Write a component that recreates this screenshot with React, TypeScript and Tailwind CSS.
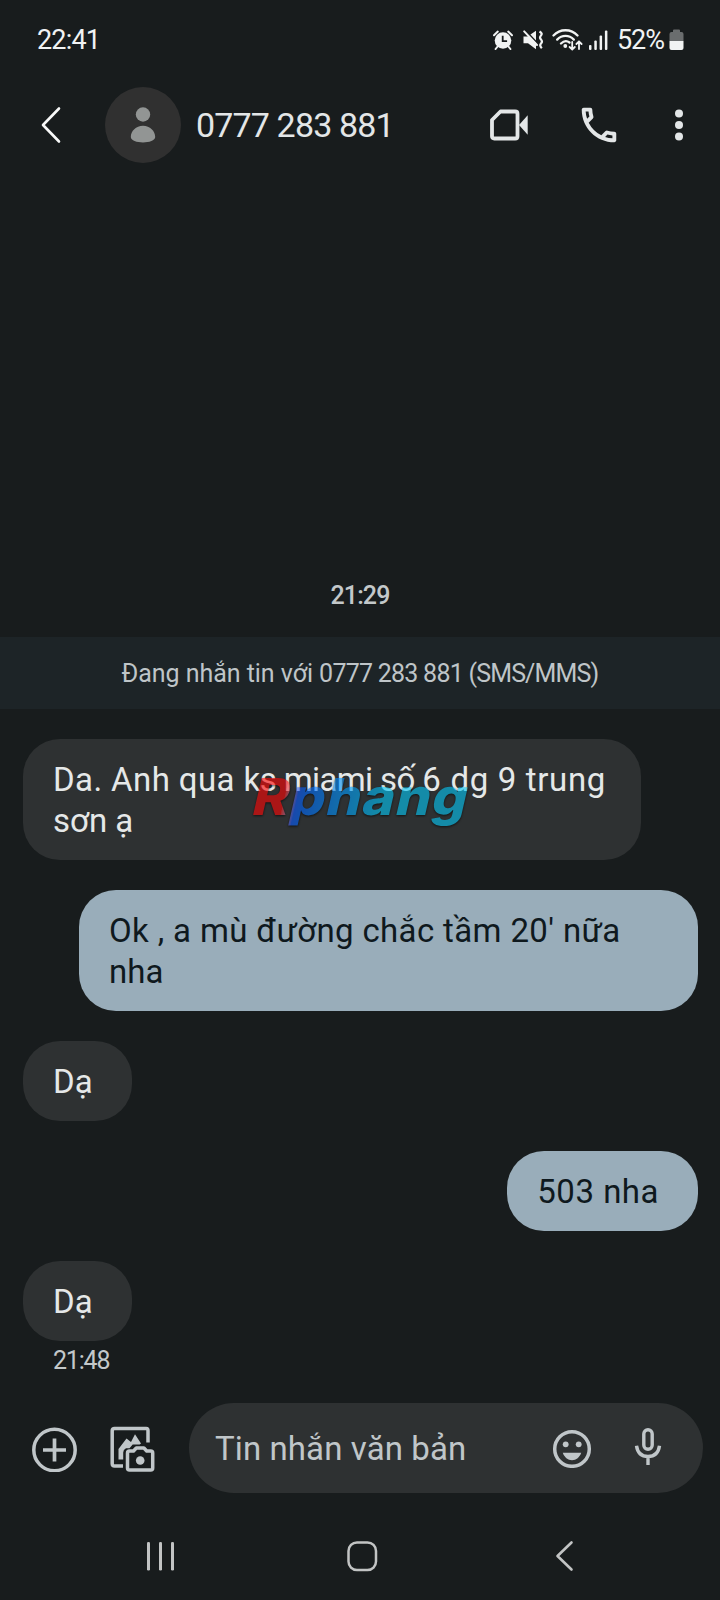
import { ReactNode } from "react";
import { MdOutlineCall } from "react-icons/md";

function StatusBar() {
  return (
    <div className="flex h-20 items-center pl-[37px] pr-[36px] text-[27px] text-[#f1f3f3]">
      <span className="tracking-[-0.8px]">22:41</span>
      <div className="ml-auto flex items-center">
        <svg width="20" height="20" viewBox="0 0 20 20" fill="none">
          <circle cx="10" cy="10.5" r="8.3" fill="#f1f3f3" />
          <path d="M1 5.2 4.8 1.6M19 5.2 15.2 1.6M4.6 16.5 2.6 19M15.4 16.5l2 2.5" stroke="#f1f3f3" strokeWidth="2" strokeLinecap="round" />
          <path d="M9.7 5.8v5.4h4.4" stroke="#181c1d" strokeWidth="1.8" />
        </svg>
        <svg className="ml-[10px]" width="21" height="20" viewBox="0 0 21 20" fill="none">
          <path d="M.5 6.5h4L13 .8v18.4l-8-6H.5z" fill="#f1f3f3" />
          <path d="M1.8 -.4 15 13.8" stroke="#181c1d" strokeWidth="1.6" />
          <path d="M1.2 1.4 14 15" stroke="#f1f3f3" strokeWidth="2" strokeLinecap="round" />
          <path d="M16.5 1.5q3.4 2 1.5 4t0 4 0 4 .8 4.8" stroke="#f1f3f3" strokeWidth="2.2" />
        </svg>
        <svg className="ml-[8px]" width="31" height="22" viewBox="0 0 31 22" fill="none" stroke="#f1f3f3" strokeWidth="2.3" strokeLinecap="round">
          <path d="M1.5 6.5C8-.5 19-.5 25.5 6.5M5.2 10.6c4.8-4.9 11.8-4.9 16.6 0M9 14.5c2.8-2.7 6-2.9 8.5-1" />
          <circle cx="13.3" cy="17" r="1.9" fill="#f1f3f3" stroke="none" />
          <path d="M20.2 13v7.5M17.6 18l2.6 2.6 2.6-2.6M27 20v-7.5M24.4 15l2.6-2.6 2.6 2.6" strokeWidth="1.8" />
        </svg>
        <svg className="ml-[6px]" width="19" height="20" viewBox="0 0 19 20" fill="#f1f3f3">
          <rect x="0" y="15" width="2.5" height="5" rx="1" />
          <rect x="5.3" y="10.5" width="2.5" height="9.5" rx="1" />
          <rect x="10.6" y="5.5" width="2.5" height="14.5" rx="1" />
          <rect x="15.9" y="0.5" width="2.5" height="19.5" rx="1" />
        </svg>
        <span className="ml-[9px] tracking-[-1px]">52%</span>
        <svg className="ml-[5px]" width="15" height="22" viewBox="0 0 15 22">
          <path d="M4 1.5Q4 .5 5 .5h5q1 0 1 1V3h1.5Q14.5 3 14.5 5v7H.5V5Q.5 3 2.5 3H4z" fill="#6a6d6e" />
          <path d="M.5 12h14v7q0 2-2 2h-10q-2 0-2-2z" fill="#f1f3f3" />
        </svg>
      </div>
    </div>
  );
}

function Header() {
  return (
    <header className="flex h-[90px] items-center text-[#e3e6e7]">
      <svg className="ml-[40px]" width="22" height="38" viewBox="0 0 22 38" fill="none">
        <path d="M19 2.5 3 19l16 16.5" stroke="#f8f9f9" strokeWidth="2.6" strokeLinecap="round" strokeLinejoin="round" />
      </svg>
      <div className="ml-[43px] flex size-[76px] items-center justify-center rounded-full bg-[#303030]">
        <svg width="26" height="36" viewBox="0 0 26 36" fill="#929594">
          <circle cx="13" cy="7.5" r="7.2" />
          <path d="M.8 30C.8 24 6 18.7 13 18.7S25.2 24 25.2 30c0 7.2-24.4 7.2-24.4 0z" />
        </svg>
      </div>
      <h1 className="ml-[15px] text-[34px] tracking-[-0.85px]">0777 283 881</h1>
      <div className="ml-auto flex items-center">
        <svg width="40" height="34" viewBox="0 0 40 34">
          <path d="M11.5 3.5h14.7q2.3 0 2.3 2.3v22.4q0 2.3-2.3 2.3H5.3Q3 30.5 3 28.2V12z" fill="none" stroke="#e3e6e7" strokeWidth="3.8" strokeLinejoin="round" />
          <path d="M30 17 38.7 7.3v19.4z" fill="#e3e6e7" />
        </svg>
        <MdOutlineCall className="ml-[47px]" size={46} />
        <svg className="ml-[52px] mr-[36px]" width="10" height="34" viewBox="0 0 10 34" fill="#e3e6e7">
          <circle cx="5" cy="5.5" r="4" /><circle cx="5" cy="17" r="4" /><circle cx="5" cy="28.5" r="4" />
        </svg>
      </div>
    </header>
  );
}

function Bubble({ out, wide, children }: { out?: boolean; wide?: boolean; children: ReactNode }) {
  return (
    <div className={`relative rounded-[37px] pl-[30px] pt-5 text-[33px] leading-[41px] ${out ? "self-end bg-[#99adba] text-[#0f191e]" : "self-start bg-[#2e3132] text-[#e5e8e8]"} ${wide ? "h-[121px]" : "h-20"} ${wide ? (out ? "w-[619px]" : "w-[618px]") : ""}`}>
      {children}
    </div>
  );
}

function Composer() {
  return (
    <div className="flex h-[90px] items-center pl-[31px] pr-[17px] text-[#c0c6c9]">
      <svg width="47" height="47" viewBox="0 0 47 47" fill="none" stroke="#c0c6c9">
        <circle cx="23.5" cy="25" r="20.7" strokeWidth="3.5" />
        <path d="M23.5 13.5v23M12 25h23" strokeWidth="3.7" />
      </svg>
      <svg className="ml-[31px]" width="48" height="48" viewBox="0 0 48 48" fill="none" stroke="#c0c6c9" strokeLinejoin="round">
        <path d="M14 42H5.5q-2.3 0-2.3-2.3V6.8Q3.2 4.5 5.5 4.5h31.7Q39 4.5 39 6.8V18.5" strokeWidth="3.5" />
        <path d="M9.5 35.5V25L17.5 14.5l4.5 3.5L26 10.2l6 9.3-1.3 1.1h-7L20.5 24.3h-3.5q-2.8 1.5-2.8 4.2v7z" fill="#c0c6c9" stroke="none" />
        <path d="M20.5 27h4l2.8-3h7.6l2.8 3h4q2 0 2 2v15q0 2-2 2H20.500q-2 0-2-2V29q0-2 2-2z" strokeWidth="3.5" />
        <circle cx="31.2" cy="36.5" r="4.3" fill="#c0c6c9" stroke="none" />
      </svg>
      <div className="ml-[32px] flex h-[90px] flex-1 items-center rounded-full bg-[#2e3132] pl-[26px]">
        <span className="pt-px text-[33px] tracking-[0.1px]">Tin nhắn văn bản</span>
        <svg className="ml-auto" width="40" height="40" viewBox="0 0 40 40" fill="#c0c6c9">
          <circle cx="20" cy="21" r="17.3" fill="none" stroke="#c0c6c9" strokeWidth="3.5" />
          <circle cx="13.7" cy="16.3" r="2.9" /><circle cx="26.7" cy="16.3" r="2.9" />
          <path d="M10.8 24.8h18.4c-1.5 4.6-5 7.4-9.2 7.4s-7.700-2.800-9.200-7.400z" />
        </svg>
        <svg className="ml-[42px] mr-[41px]" width="28" height="40" viewBox="0 0 28 40" fill="none" stroke="#c0c6c9" strokeWidth="3.4">
          <rect x="9.8" y="1.8" width="8.4" height="19.5" rx="4.2" />
          <path d="M2.5 17.8C3.5 25 8 28.5 14 28.5S24.5 25 25.5 17.8M14 28.5v8.5" />
        </svg>
      </div>
    </div>
  );
}

function NavBar() {
  return (
    <nav className="flex h-[107px] items-start pl-[146px] pt-[47px]">
      <svg width="29" height="32" viewBox="0 0 29 32" fill="#c2c4c4">
        <rect x="1" y="2" width="3" height="28.5" rx="1.3" /><rect x="13" y="2" width="3" height="28.5" rx="1.3" /><rect x="25" y="2" width="3" height="28.5" rx="1.3" />
      </svg>
      <svg className="ml-[171px]" width="32" height="32" viewBox="0 0 32 32" fill="none" stroke="#c2c4c4" strokeWidth="2.5">
        <rect x="2.5" y="2.5" width="27.5" height="27.5" rx="8.5" />
      </svg>
      <svg className="ml-[177px]" width="20" height="32" viewBox="0 0 20 32" fill="none" stroke="#c2c4c4" strokeWidth="2.6" strokeLinecap="round" strokeLinejoin="round">
        <path d="M16.5 2.5 2.5 16l14 13.5" />
      </svg>
    </nav>
  );
}

export default function App() {
  return (
    <div className="flex h-[1600px] w-[720px] flex-col overflow-hidden bg-[#181c1d] font-['Roboto',sans-serif]">
      <StatusBar />
      <Header />
      <div className="mt-[407px] flex h-[60px] justify-center pt-[4px] text-[25px] font-medium leading-[30px] tracking-[-0.9px] text-[#c3c8ca]">21:29</div>
      <div className="flex h-[72px] items-center justify-center bg-[#1d2427] text-[25px] text-[#bfc5c8]">
        <p className="whitespace-pre pt-0.5">
          <span className="tracking-[-0.05px]">Đang nhắn tin với </span>
          <span className="tracking-[-0.75px]">0777 283 881 </span>
          <span className="tracking-[-0.85px]">(SMS/MMS)</span>
        </p>
      </div>
      <main className="flex h-[694px] flex-col gap-[30px] pl-[23px] pr-[22px] pt-[30px]">
        <Bubble wide>
          <span className="tracking-[0.4px]">Da. Anh qua </span>
          <span className="tracking-[-0.6px]">ks miami số </span>
          <span className="tracking-[0.66px]">6 dg 9 trung</span>
          <br />
          <span>sơn ạ</span>
          <div className="absolute left-[224px] top-[28px] origin-left scale-x-[1.08] opacity-60 drop-shadow-[0_1px_1px_#000000]">
            <div className="origin-bottom-left -skew-x-12 text-[51px] font-extrabold leading-[60px]">
              <span className="bg-linear-to-r from-[#ff0505] from-14% via-[#0c5aff] via-20% to-[#04c8f7] to-60% bg-clip-text font-['Inter',sans-serif] tracking-[1px] text-transparent">Rphang</span>
            </div>
          </div>
        </Bubble>
        <Bubble out wide>
          <span className="tracking-[0.36px]">Ok , a mù đường chắc tầm 20' nữa</span><br /><span>nha</span>
        </Bubble>
        <Bubble><span className="mr-[39px]">Dạ</span></Bubble>
        <Bubble out><span className="mr-[39px] tracking-[0.5px]">503 nha</span></Bubble>
        <div className="flex flex-col">
          <Bubble><span className="mr-[39px]">Dạ</span></Bubble>
          <span className="ml-[30px] mt-[5px] text-[25px] leading-[30px] tracking-[-1.2px] text-[#c3c8ca]">21:48</span>
        </div>
      </main>
      <Composer />
      <NavBar />
    </div>
  );
}
